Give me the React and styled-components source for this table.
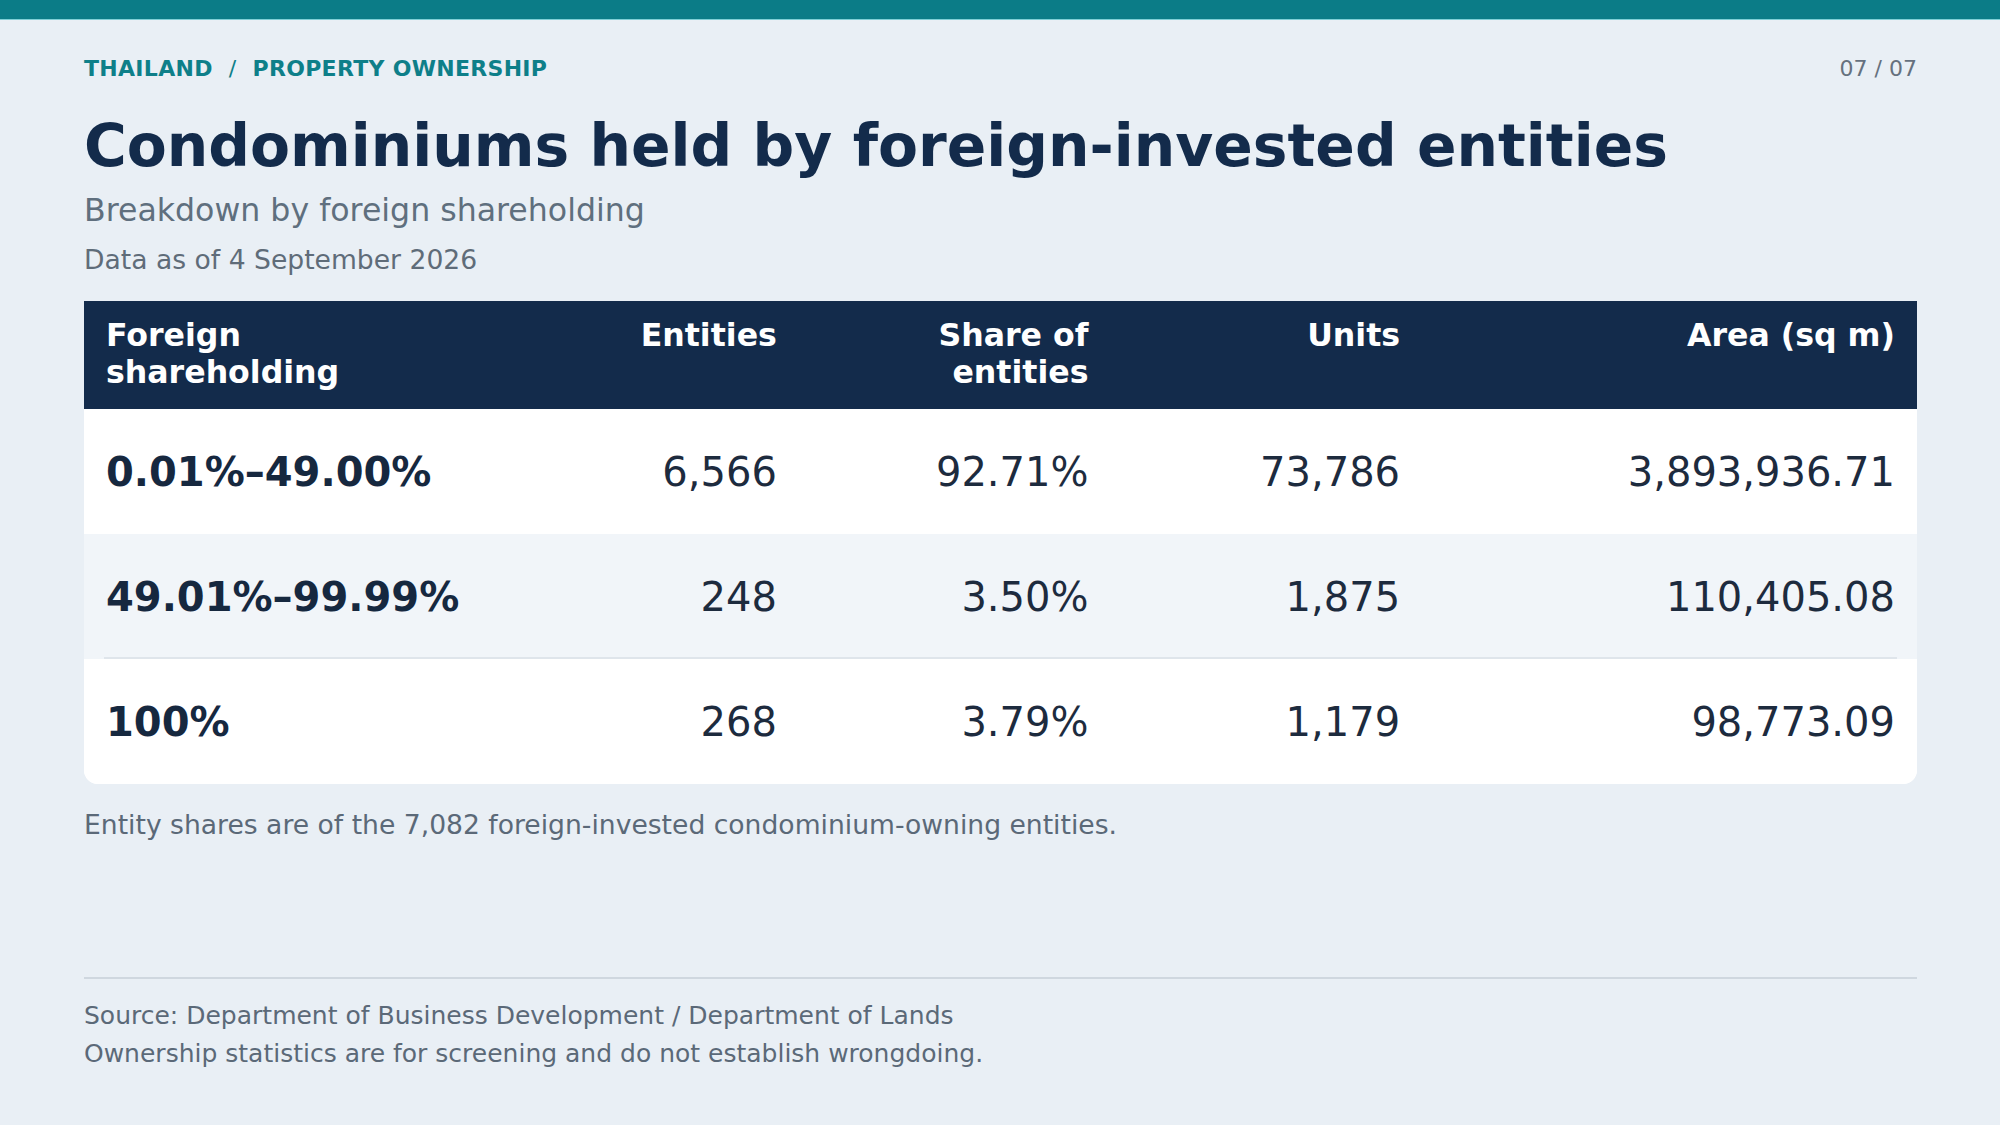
import styled, { createGlobalStyle } from "styled-components";

const rows = [
  { band: "0.01%–49.00%", entities: "6,566", share: "92.71%", units: "73,786", area: "3,893,936.71" },
  { band: "49.01%–99.99%", entities: "248", share: "3.50%", units: "1,875", area: "110,405.08", tint: true, divided: true },
  { band: "100%", entities: "268", share: "3.79%", units: "1,179", area: "98,773.09" },
];

function App() {
  return (
    <>
      <GlobalStyle />
      <Page>
        <TopBar />
        <Content>
          <HeadRow>
            <Crumbs>
              <span>THAILAND</span>
              <CrumbSep>/</CrumbSep>
              <span>PROPERTY OWNERSHIP</span>
            </Crumbs>
            <PageNo>07 / 07</PageNo>
          </HeadRow>
          <Title>Condominiums held by foreign-invested entities</Title>
          <Subtitle>Breakdown by foreign shareholding</Subtitle>
          <AsOf>Data as of 4 September 2026</AsOf>

          <Table>
            <HeaderRow>
              <HeadCell>Foreign<br />shareholding</HeadCell>
              <HeadCell num>Entities</HeadCell>
              <HeadCell num>Share of<br />entities</HeadCell>
              <HeadCell num>Units</HeadCell>
              <HeadCell num>Area (sq m)</HeadCell>
            </HeaderRow>
            {rows.map((r) => (
              <BodyRow key={r.band} tint={r.tint} divided={r.divided}>
                <BandCell>{r.band}</BandCell>
                <Cell>{r.entities}</Cell>
                <Cell>{r.share}</Cell>
                <Cell>{r.units}</Cell>
                <Cell>{r.area}</Cell>
              </BodyRow>
            ))}
          </Table>

          <Note>Entity shares are of the 7,082 foreign-invested condominium-owning entities.</Note>

          <Footer>
            <FooterLine>Source: Department of Business Development / Department of Lands</FooterLine>
            <FooterLine>Ownership statistics are for screening and do not establish wrongdoing.</FooterLine>
          </Footer>
        </Content>
      </Page>
    </>
  );
}

const GlobalStyle = createGlobalStyle`
  html, body {
    margin: 0;
    padding: 0;
    background: #e9eff5;
  }
  body {
    font-family: "DejaVu Sans", "Liberation Sans", sans-serif;
  }
`;

const Page = styled.div`
  display: flex;
  flex-direction: column;
  width: 2000px;
  height: 1125px;
  background: #e9eff5;
  overflow: hidden;
`;

const TopBar = styled.div`
  height: 19px;
  flex-shrink: 0;
  background: #0b7c87;
  border-bottom: 1px solid #7fd0d6;
`;

const Content = styled.div`
  flex: 1;
  display: flex;
  flex-direction: column;
  padding: 35px 83px 52px 84px;
`;

const HeadRow = styled.div`
  display: flex;
  align-items: center;
  justify-content: space-between;
  height: 26px;
`;

const Crumbs = styled.div`
  display: flex;
  align-items: center;
  font-size: 22px;
  font-weight: bold;
  letter-spacing: 0.3px;
  color: #0e7f89;
`;

const CrumbSep = styled.span`
  margin: 0 16px;
  font-weight: normal;
`;

const PageNo = styled.span`
  font-size: 22px;
  color: #66717e;
`;

const Title = styled.h1`
  margin: 32px 0 0;
  font-size: 58.3px;
  line-height: 67px;
  font-weight: bold;
  color: #132b4b;
`;

const Subtitle = styled.div`
  margin-top: 12px;
  font-size: 31.6px;
  line-height: 37px;
  color: #5f6f7e;
`;

const AsOf = styled.div`
  margin-top: 15px;
  font-size: 26.6px;
  line-height: 31px;
  color: #5f6c79;
`;

const Table = styled.div`
  margin-top: 26px;
  display: flex;
  flex-direction: column;
  background: #ffffff;
  border-radius: 0 0 14px 14px;
  overflow: hidden;
`;

const columns = "22% 17% 17% 17% 27%";

const HeaderRow = styled.div`
  display: grid;
  grid-template-columns: ${columns};
  background: #132b4b;
`;

const HeadCell = styled.div`
  color: #ffffff;
  font-size: 31.6px;
  line-height: 37px;
  font-weight: bold;
  padding: 16px 22px 18px;
  text-align: ${(p) => (p.num ? "right" : "left")};
`;

const BodyRow = styled.div`
  position: relative;
  display: grid;
  grid-template-columns: ${columns};
  height: 125px;
  background: ${(p) => (p.tint ? "#f1f5f9" : "#ffffff")};

  &::after {
    content: "";
    display: ${(p) => (p.divided ? "block" : "none")};
    position: absolute;
    left: 20px;
    right: 20px;
    bottom: 0;
    height: 2px;
    background: #dfe5eb;
  }
`;

const Cell = styled.div`
  display: flex;
  align-items: center;
  justify-content: flex-end;
  padding: 0 22px;
  font-size: 40px;
  color: #1d2b3e;
`;

const BandCell = styled(Cell)`
  justify-content: flex-start;
  font-weight: bold;
  color: #16283f;
`;

const Note = styled.div`
  margin-top: 26px;
  font-size: 26.6px;
  line-height: 30px;
  color: #5b6978;
`;

const Footer = styled.div`
  margin-top: auto;
  border-top: 2px solid #cfd7df;
  padding-top: 18px;
`;

const FooterLine = styled.div`
  font-size: 25px;
  line-height: 38px;
  color: #5b6978;
`;

export default App;
